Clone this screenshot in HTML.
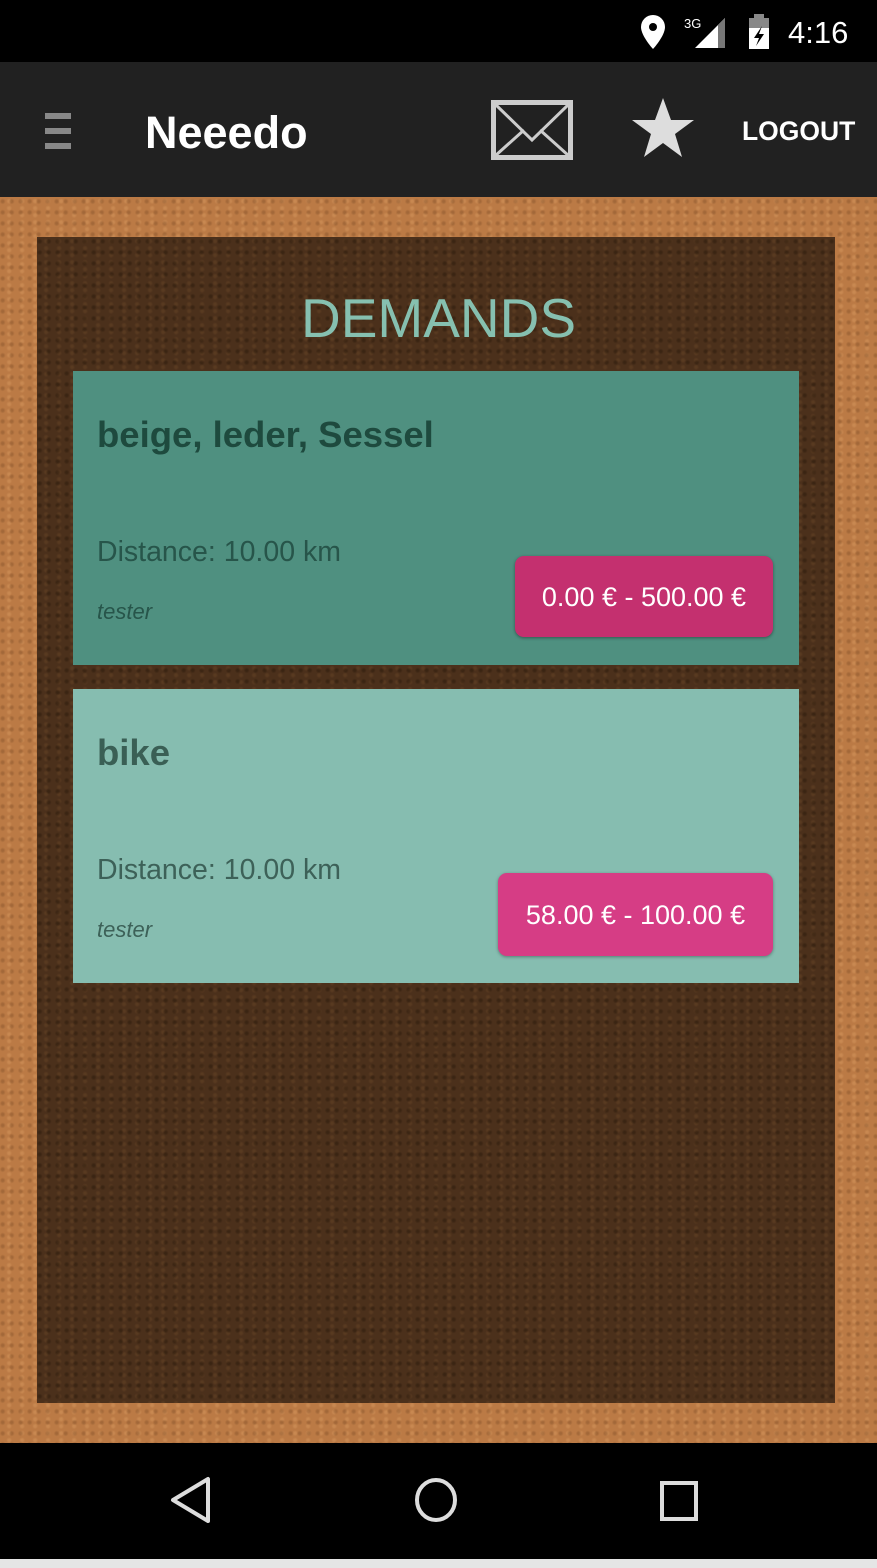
<!DOCTYPE html>
<html><head><meta charset="utf-8"><style>
*{margin:0;padding:0;box-sizing:border-box}
body{width:877px;height:1568px;position:relative;overflow:hidden;background:#000;font-family:"Liberation Sans",sans-serif}
.a{position:absolute}
.t{white-space:nowrap;line-height:1}
</style></head><body>
<div class="a" style="left:0;top:0;width:877px;height:62px;background:#000"></div>
<svg class="a" style="left:636px;top:12px" width="240" height="40" viewBox="0 0 240 40">
<path d="M17 3a12 12 0 0 0-12 12c0 9 12 22 12 22s12-13 12-22A12 12 0 0 0 17 3z" fill="#fff"/><circle cx="17" cy="15" r="4" fill="#000"/>
<text x="48" y="16" fill="#fff" font-size="13" font-family="Liberation Sans">3G</text>
<path d="M89 6 L89 36 L59 36 Z" fill="#fff"/><path d="M89 6 L89 36 L82 36 L82 13Z" fill="#777"/>
<rect x="113" y="6" width="20" height="31" fill="#fff"/><rect x="118" y="2" width="10" height="5" fill="#888"/><rect x="113" y="6" width="20" height="10" fill="#888"/>
<path d="M126 14 L118 26 L123 26 L120 34 L128 22 L123 22Z" fill="#000"/>
</svg>
<div class="a t" style="left:788px;top:17px;color:#fff;font-size:31px">4:16</div>
<div class="a" style="left:0;top:62px;width:877px;height:135px;background:#212121"></div>
<div class="a" style="left:45px;top:113px;width:26px;height:6px;background:#888"></div>
<div class="a" style="left:45px;top:128px;width:26px;height:6px;background:#888"></div>
<div class="a" style="left:45px;top:143px;width:26px;height:6px;background:#888"></div>
<div class="a t" style="left:145px;top:110px;color:#fff;font-size:45px;font-weight:bold">Neeedo</div>
<svg class="a" style="left:491px;top:100px" width="82" height="60" viewBox="0 0 82 60"><rect x="2.5" y="2.5" width="77" height="55" fill="none" stroke="#ccc" stroke-width="5"/><path d="M4 4 L41 40 L78 4 M4 56 L33 30 M78 56 L49 30" fill="none" stroke="#ccc" stroke-width="3"/></svg>
<svg class="a" style="left:630px;top:96px" width="66" height="64" viewBox="0 0 66 64"><path d="M33 2 L41 24 L64 24 L45 38 L52 61 L33 47 L14 61 L21 38 L2 24 L25 24Z" fill="#ddd"/></svg>
<div class="a t" style="left:742px;top:118px;color:#fff;font-size:26.5px;font-weight:bold">LOGOUT</div>
<div class="a" style="left:0;top:197px;width:877px;height:1246px;background:#bb7a45;background-image:radial-gradient(circle at 30% 40%,rgba(90,50,20,.25) 1px,transparent 3px),radial-gradient(circle at 70% 60%,rgba(230,170,110,.3) 1px,transparent 3px);background-size:9px 11px,13px 7px"></div>
<div class="a" style="left:37px;top:237px;width:798px;height:1166px;background:#4b301b;background-image:radial-gradient(circle at 30% 40%,rgba(20,10,0,.3) 1px,transparent 3px),radial-gradient(circle at 70% 60%,rgba(120,80,45,.3) 1px,transparent 3px);background-size:9px 11px,13px 7px"></div>
<div class="a t" style="left:0;width:877px;text-align:center;top:291px;color:#86c0b0;font-size:55px">DEMANDS</div>
<div class="a" style="left:73px;top:371px;width:726px;height:294px;background:#4f9080"></div>
<div class="a t" style="left:97px;top:417px;color:#1e4a3e;font-size:36.5px;font-weight:bold">beige, leder, Sessel</div>
<div class="a t" style="left:97px;top:538px;color:#27554a;font-size:28.5px">Distance: 10.00 km</div>
<div class="a t" style="left:97px;top:601px;color:#27554a;font-size:22px;font-style:italic">tester</div>
<div class="a t" style="left:515px;top:556px;width:258px;height:81px;background:#c4306f;border-radius:9px;box-shadow:0 1px 3px rgba(0,0,0,.4);color:#fff;font-size:27px;text-align:center;line-height:83px">0.00 € - 500.00 €</div>
<div class="a" style="left:73px;top:689px;width:726px;height:294px;background:#86bdb0"></div>
<div class="a t" style="left:97px;top:735px;color:#3a5f55;font-size:36.5px;font-weight:bold">bike</div>
<div class="a t" style="left:97px;top:856px;color:#3d6158;font-size:28.5px">Distance: 10.00 km</div>
<div class="a t" style="left:97px;top:919px;color:#3d6158;font-size:22px;font-style:italic">tester</div>
<div class="a t" style="left:498px;top:873px;width:275px;height:83px;background:#d63d85;border-radius:9px;box-shadow:0 1px 3px rgba(0,0,0,.35);color:#fff;font-size:27px;text-align:center;line-height:85px">58.00 € - 100.00 €</div>
<div class="a" style="left:0;top:1443px;width:877px;height:116px;background:#000"></div>
<div class="a" style="left:0;top:1559px;width:877px;height:9px;background:#e5e5e5"></div>
<svg class="a" style="left:0;top:1443px" width="877" height="116" viewBox="0 0 877 116">
<path d="M208 36 L208 78 L173 57Z" fill="none" stroke="#ddd" stroke-width="4" stroke-linejoin="round"/>
<ellipse cx="436" cy="57" rx="19" ry="20" fill="none" stroke="#ddd" stroke-width="4"/>
<rect x="662" y="40" width="34" height="36" fill="none" stroke="#ddd" stroke-width="4"/>
</svg>
</body></html>
